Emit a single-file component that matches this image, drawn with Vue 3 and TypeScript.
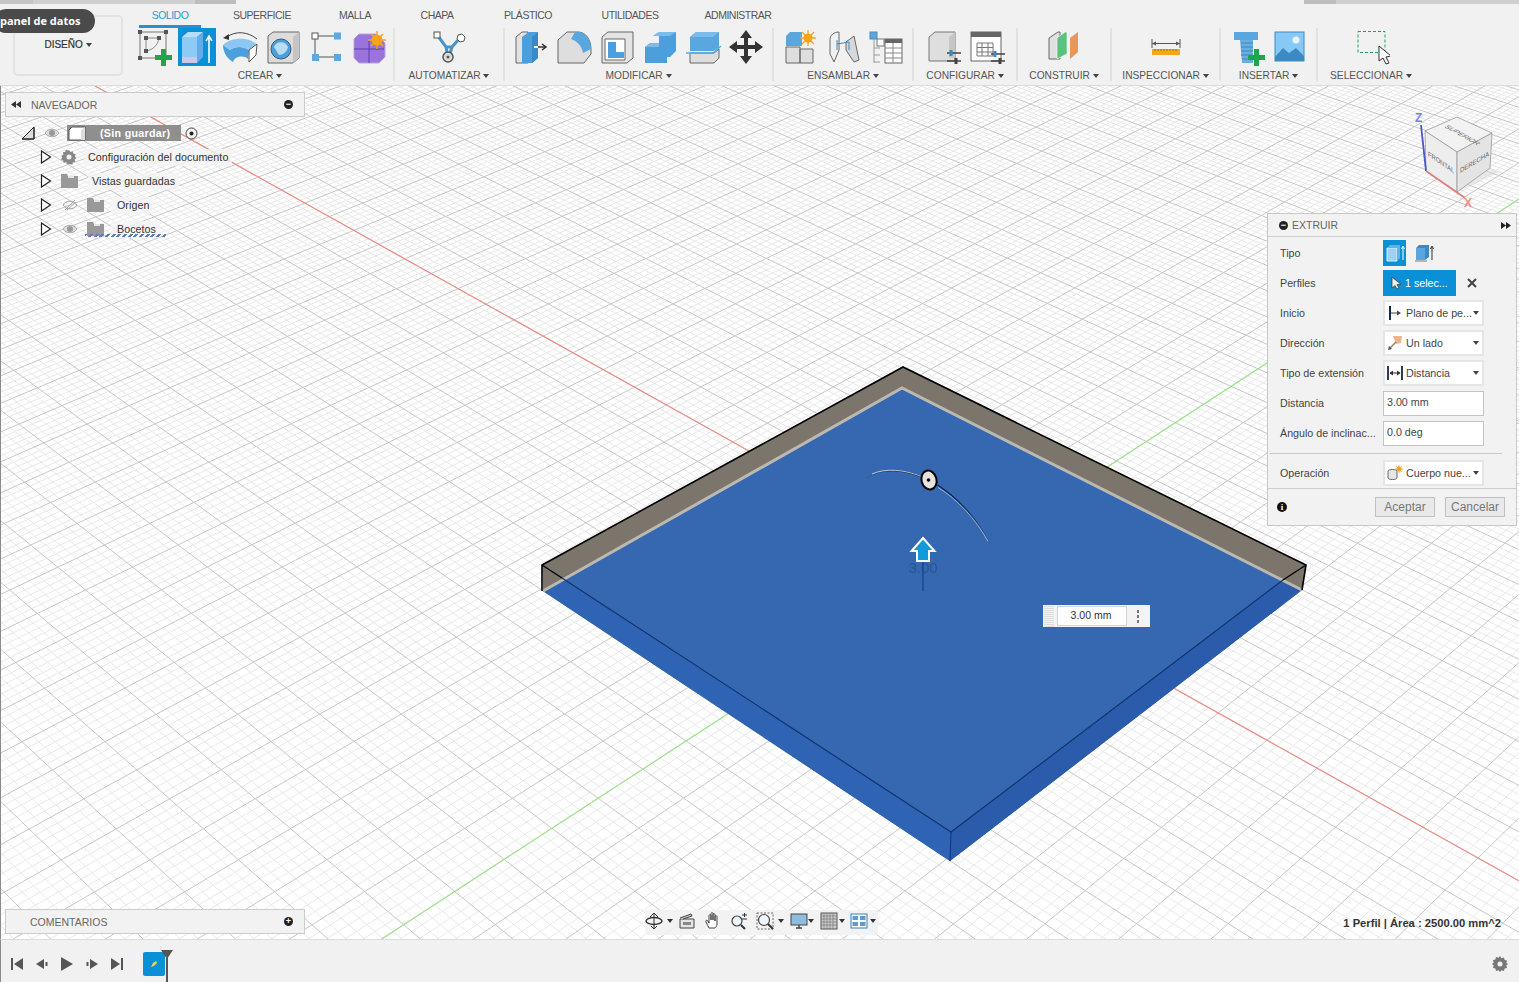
<template>
  <div class="app">
    <!-- Ribbon -->
    <header class="toolbar">
      <div class="strip">
        <div class="strip__left"><i></i><i></i><i></i></div>
        <div class="strip__right"><i></i><i></i></div>
      </div>
      <div class="toolbar__body">
        <div class="workspace">
          <div class="workspace__box">DISEÑO <span class="caret"></span></div>
        </div>
        <div class="toolbar__main">
          <nav class="tabs">
            <span
              v-for="(t, i) in tabs" :key="t.name"
              :class="['tab', { 'tab--on': i === 0 }]"
              :style="{ width: t.width + 'px' }"
            >{{ t.name }}</span>
          </nav>
          <div class="ribbon">
            <div class="group group--first" style="width: 262px">
              <div class="group__icons">
                <svg class="ico" viewBox="0 0 38 38">
                  <rect x="5" y="4" width="26" height="26" fill="none" stroke="#777" />
                  <path d="M11 10h13M11 10v13" fill="none" stroke="#888" />
                  <path d="M24 10C23 17 18 22 11 23" fill="none" stroke="#888" />
                  <path d="M3 2h4v4H3zM29 2h4v4h-4zM3 28h4v4H3zM9 8h4v4H9zM22 8h4v4h-4zM9 21h4v4H9z" fill="#555" />
                  <path d="M26 21h5v6h6v5h-6v6h-5v-6h-6v-5h6z" fill="#1da64a" />
                </svg>
                <svg class="ico ico--on" viewBox="0 0 38 38">
                  <rect width="38" height="38" fill="#0a90d6" />
                  <path d="M4 9h15v26H4z" fill="#8fcaf6" />
                  <path d="M4 29h15v6H4z" fill="#cfc7ea" />
                  <path d="M4 9l6-5h15l-6 5z" fill="#b7def9" />
                  <path d="M19 9l6-5v25l-6 6z" fill="#5eaee8" />
                  <path d="M31 35V9M28 13l3-5 3 5" fill="none" stroke="#fff" stroke-width="1.6" />
                </svg>
                <svg class="ico" viewBox="0 0 38 38">
                  <path d="M2 17C2 25 7 31 12 34C14 28 23 27 27 31L28 22C22 18 14 18 9 22Z" fill="#4a9fdc" />
                  <path d="M2 17C10 9 28 9 35 16L28 22C22 18 14 18 9 22Z" fill="#8cc6f2" />
                  <path d="M28 22L36 16L35 27L28 34Z" fill="#fff" stroke="#555" />
                  <path d="M6 9C14 3 26 3 36 11" fill="none" stroke="#444" />
                  <path d="M2 10l6-4 0 6z" fill="#333" />
                </svg>
                <svg class="ico" viewBox="0 0 38 38">
                  <path d="M4 8l5-4h26v26l-6 5H4z" fill="#dcdcdc" stroke="#666" />
                  <path d="M29 9l6-5v26l-6 5z" fill="#c4c4c4" />
                  <circle cx="17" cy="21" r="10" fill="#4a9fdc" stroke="#40586e" />
                  <path d="M10 19a7.500 7.500 0 0 1 14 0c-1 4-4 8-9 8z" fill="#b9dcf5" />
                </svg>
                <svg class="ico" viewBox="0 0 38 38">
                  <path d="M11 8h16M8 11v15M11 29h16" stroke="#555" fill="none" />
                  <rect x="5" y="5" width="6" height="6" fill="#fff" stroke="#555" />
                  <rect x="27" y="4.500" width="7" height="7" fill="#5fa8dc" />
                  <rect x="5" y="26" width="7" height="7" fill="#5fa8dc" />
                  <rect x="27" y="26" width="7" height="7" fill="#5fa8dc" />
                </svg>
                <svg class="ico" viewBox="0 0 38 38">
                  <path d="M9 6h17l9 9v14l-6 6H9l-5-5V11z" fill="#9a74dc" stroke="#b8a2e6" />
                  <path d="M4 21h30M19 11v24M27 12v10" stroke="#5d3fa6" fill="none" />
                  <circle cx="27" cy="12" r="5.500" fill="#f6a41c" />
                  <path d="M27 3v18M18 12h18M21 6l12 12M33 6L21 18" stroke="#f6a41c" stroke-width="1.500" />
                </svg>
              </div>
              <div class="group__label">CREAR <span class="caret"></span></div>
            </div>
            <div class="group" style="width: 110px">
              <div class="group__icons">
                <svg class="ico" viewBox="0 0 38 38">
                  <path d="M8 8l8 11h6l7-8M16 19l2 10M22 19l-3 10" fill="none" stroke="#4a93c8" stroke-width="3" />
                  <rect x="4" y="4" width="6" height="6" fill="#fff" stroke="#555" />
                  <path d="M28 7l4-1 3 3-1 4-4 1-3-3z" fill="#fff" stroke="#555" />
                  <circle cx="18" cy="29" r="5" fill="#ddd" stroke="#555" stroke-width="1.500" />
                  <circle cx="18" cy="29" r="1.500" fill="#555" />
                </svg>
              </div>
              <div class="group__label">AUTOMATIZAR <span class="caret"></span></div>
            </div>
            <div class="group" style="width: 269px">
              <div class="group__icons">
                <svg class="ico" viewBox="0 0 38 38">
                  <path d="M4 9l6-5h6v31H4z" fill="#e2e2e2" stroke="#666" />
                  <path d="M10 9l7-5h9v26l-6 5H10z" fill="#4a9fdc" />
                  <path d="M20 9l6-5v26l-6 5z" fill="#3a89c4" />
                  <path d="M22 19h10" stroke="#fff" stroke-width="2" />
                  <path d="M26 19h7M30 16l4 3-4 3" fill="none" stroke="#333" stroke-width="1.500" />
                </svg>
                <svg class="ico" viewBox="0 0 38 38">
                  <path d="M3 35V12l9-8h11c8 0 13 8 13 17v5l-7 9z" fill="#dedede" stroke="#666" />
                  <path d="M20 4h3c8 0 13 8 13 17l-8 4c-1-7-6-12-12-14z" fill="#5aa7e0" />
                </svg>
                <svg class="ico" viewBox="0 0 38 38">
                  <path d="M4 9l6-5h25v26l-6 5H4z" fill="#e4e4e4" stroke="#666" />
                  <path d="M7 11h20v21H7z" fill="#fff" stroke="#666" />
                  <path d="M10 14h8v10h8v6H10z" fill="#4a9fdc" />
                </svg>
                <svg class="ico" viewBox="0 0 38 38">
                  <path d="M12 8l6-4h17v19l-6 6H18V8z" fill="#4a9fdc" />
                  <path d="M12 8l6-4h17l-6 4z" fill="#7cbcec" />
                  <path d="M4 19l5-4h17v20H4z" fill="#4a9fdc" />
                  <path d="M4 19l5-4h9v4z" fill="#7cbcec" />
                </svg>
                <svg class="ico" viewBox="0 0 38 38">
                  <path d="M6 9l6-5h23v16l-6 3H6z" fill="#5aa7e0" />
                  <path d="M6 9l6-5h23l-6 5z" fill="#7cbcec" />
                  <path d="M6 25h24l5-4v9l-5 5H6z" fill="#dedede" stroke="#666" />
                  <path d="M2 25h27l8-7" fill="none" stroke="#3fb8e8" stroke-width="1.600" />
                </svg>
                <svg class="ico" viewBox="0 0 38 38">
                  <path d="M19 2l6 8h-4v7h7v-4l8 6-8 6v-4h-7v7h4l-6 8-6-8h4v-7h-7v4l-8-6 8-6v4h7v-7h-4z" fill="#333" />
                </svg>
              </div>
              <div class="group__label">MODIFICAR <span class="caret"></span></div>
            </div>
            <div class="group" style="width: 140px">
              <div class="group__icons">
                <svg class="ico" viewBox="0 0 38 38">
                  <path d="M5 8l4-4h12v14H5z" fill="#5aa7e0" />
                  <path d="M5 19h14v16H5zM19 21h13v14H19z" fill="#dedede" stroke="#666" />
                  <circle cx="27" cy="10" r="4.500" fill="#f6a41c" />
                  <path d="M27 2v16M19 10h16M21 4l12 12M33 4L21 16" stroke="#f6a41c" stroke-width="1.300" />
                </svg>
                <svg class="ico" viewBox="0 0 38 38">
                  <path d="M6 12c0-5 4-8 9-8v18l-5 12-4-8z" fill="#f0f0f0" stroke="#666" />
                  <path d="M22 14l8-6 5 24-5 2-8-12z" fill="#d8d8d8" stroke="#666" />
                  <path d="M13 12v10M25 14v8M13 16l12-2" stroke="#3a89c4" fill="none" />
                </svg>
                <svg class="ico" viewBox="0 0 38 38">
                  <rect x="3" y="4" width="7" height="7" fill="#5aa7e0" stroke="#4a8ab8" />
                  <rect x="10" y="11" width="7" height="7" fill="#fff" stroke="#777" />
                  <path d="M7 11v24M7 20h6M7 27h6M7 34h6" stroke="#999" fill="none" />
                  <rect x="18" y="11" width="17" height="24" fill="#fff" stroke="#666" />
                  <path d="M18 11h17v4H18z" fill="#666" />
                  <path d="M18 20h17M18 25h17M18 30h17M26 15v20" stroke="#888" />
                </svg>
              </div>
              <div class="group__label">ENSAMBLAR <span class="caret"></span></div>
            </div>
            <div class="group" style="width: 104px">
              <div class="group__icons">
                <svg class="ico" viewBox="0 0 38 38">
                  <path d="M4 9l6-5h20v29H4z" fill="#dedede" stroke="#777" />
                  <path d="M24 9l6-5v26h-6z" fill="#c6c6c6" />
                  <path d="M22 25h14M22 33h14" stroke="#444" stroke-width="1.500" />
                  <path d="M26 22v6" stroke="#3a89c4" stroke-width="3" />
                  <path d="M31 30v6" stroke="#444" stroke-width="3" />
                </svg>
                <svg class="ico" viewBox="0 0 38 38">
                  <rect x="3" y="4" width="30" height="29" fill="#fff" stroke="#666" />
                  <path d="M3 4h30v5H3z" fill="#666" />
                  <path d="M9 15h16v13H9zM9 19.500h16M9 24h16M14 15v13M20 15v13" fill="none" stroke="#777" />
                  <path d="M23 26h14M23 33h14" stroke="#444" stroke-width="1.500" />
                  <path d="M27 23v6" stroke="#3a89c4" stroke-width="3" />
                  <path d="M32 30v6" stroke="#444" stroke-width="3" />
                </svg>
              </div>
              <div class="group__label">CONFIGURAR <span class="caret"></span></div>
            </div>
            <div class="group" style="width: 94px">
              <div class="group__icons">
                <svg class="ico" viewBox="0 0 38 38">
                  <path d="M4 10l9-6h2v27H4z" fill="#e0e0e0" stroke="#666" />
                  <path d="M12 31V10l8-6h2v22z" fill="#58c27e" stroke="#fff" stroke-width=".6" />
                  <path d="M25 31V10l8-6v20z" fill="#e8965a" />
                </svg>
              </div>
              <div class="group__label">CONSTRUIR <span class="caret"></span></div>
            </div>
            <div class="group" style="width: 109px">
              <div class="group__icons">
                <svg class="ico" viewBox="0 0 38 38">
                  <path d="M5 11v9M33 11v9M5 15.500h28" stroke="#555" fill="none" />
                  <path d="M5 15.500l4-2v4zM33 15.500l-4-2v4z" fill="#555" />
                  <rect x="5" y="21" width="28" height="6" fill="#f2a71b" />
                  <path d="M8 21v2M11 21v2M14 21v2M17 21v2M20 21v2M23 21v2M26 21v2M29 21v2" stroke="#a8720c" />
                </svg>
              </div>
              <div class="group__label">INSPECCIONAR <span class="caret"></span></div>
            </div>
            <div class="group" style="width: 97px">
              <div class="group__icons">
                <svg class="ico" viewBox="0 0 38 38">
                  <path d="M6 4h24v8H6z" fill="#5aa7e0" />
                  <path d="M12 12h13v23H14z" fill="#6aaee0" />
                  <path d="M13 15h12M13 19h12M13 23h12M13 27h12M14 31h11" stroke="#3f85bb" />
                  <path d="M26 21h5v6h6v5h-6v6h-5v-6h-6v-5h6z" fill="#1da64a" />
                </svg>
                <svg class="ico" viewBox="0 0 38 38">
                  <rect x="4" y="4" width="29" height="29" fill="#86c9f6" stroke="#3c8ac4" />
                  <circle cx="25" cy="12" r="3.500" fill="#e8f4fc" />
                  <path d="M4 29l8-9 6 5 7-5 8 8v5H4z" fill="#3c8ac4" />
                </svg>
              </div>
              <div class="group__label">INSERTAR <span class="caret"></span></div>
            </div>
            <div class="group group--last" style="width: 106px">
              <div class="group__icons">
                <svg class="ico" viewBox="0 0 38 38">
                  <rect x="6" y="3.500" width="27" height="21" fill="none" stroke="#2f9a5c" stroke-dasharray="3 2" />
                  <path d="M27 18l0 15 4-3 3 6 3-1-3-6 5-1z" fill="#fff" stroke="#333" />
                </svg>
              </div>
              <div class="group__label">SELECCIONAR <span class="caret"></span></div>
            </div>
          </div>
        </div>
      </div>
      <div class="data-tip">panel de datos</div>
    </header>

    <!-- 3D view -->
    <main class="view">
      <svg class="scene" viewBox="0 86 1519 853" width="1519" height="853">
        <defs>
          <linearGradient id="arcDark" gradientUnits="userSpaceOnUse" x1="865" y1="470" x2="992" y2="545">
            <stop offset="0" stop-color="#0a1f4a" stop-opacity="0" />
            <stop offset=".3" stop-color="#0a1f4a" />
            <stop offset=".65" stop-color="#0a1f4a" />
            <stop offset="1" stop-color="#0a1f4a" stop-opacity="0" />
          </linearGradient>
        </defs>
        <path :d="grid.minor" stroke="#e9e9e9" stroke-width="1" fill="none" />
        <path :d="grid.major" stroke="#c7c7c7" stroke-width="1" fill="none" />
        <path :d="grid.red" stroke="#ee8d86" stroke-width="1.200" fill="none" />
        <path :d="grid.green" stroke="#9fe58f" stroke-width="1.200" fill="none" />

        <!-- plate being extruded -->
        <polygon points="903,367 1306,565 1302,590 902,388 543,591 542,565" fill="#7b756b" />
        <polygon points="902,388 1302,590 950,861 543,591" fill="#3568b0" />
        <polygon points="543,591 562,578 951,832 950,861" fill="#2f63b3" />
        <polygon points="1302,590 1283,580 951,832 950,861" fill="#2b5cab" />
        <polyline points="543,591 902,388 1302,590" fill="none" stroke="#bdb9b1" stroke-width="3" />
        <polyline points="562,578 951,832 1283,580" fill="none" stroke="#123372" stroke-width="1.200" />
        <line x1="951" y1="832" x2="950" y2="861" stroke="#123372" />
        <polyline points="542,591 542,565 903,367 1306,565 1302,590" fill="none" stroke="#000" stroke-width="1.600" />
        <line x1="542" y1="565" x2="562" y2="578" stroke="#000" stroke-width="1.400" />
        <line x1="1306" y1="565" x2="1283" y2="580" stroke="#000" stroke-width="1.400" />

        <!-- extrude manipulator -->
        <path d="M867 478C880 468 905 468 929 480C955 494 975 516 990 543" fill="none" stroke="url(#arcDark)" stroke-width="1.400" />
        <path d="M872 474C885 468 905 469 925 478" fill="none" stroke="#dfe6f0" stroke-width=".8" />
        <path d="M938 486C958 498 976 518 988 540" fill="none" stroke="#dfe6f0" stroke-width=".6" transform="translate(0 1.500)" />
        <ellipse cx="929" cy="480" rx="7.500" ry="9.500" transform="rotate(-15 929 480)" fill="#e6e2de" stroke="#000" stroke-width="2" />
        <circle cx="928.500" cy="480" r="1.800" fill="#000" />
        <text x="923" y="573" text-anchor="middle" class="ghost">3.00</text>
        <line x1="923" y1="562" x2="923" y2="591" stroke="#1c4588" stroke-width="1.400" />
        <polygon points="923,538 934.500,551 929,551 929,561 917,561 917,551 911.500,551" fill="#129bdc" stroke="#fff" stroke-width="2" />

        <!-- view cube -->
        <polygon points="1426,171 1457,192 1500,172 1470,160" fill="#d6d6d6" opacity=".5" />
        <polygon points="1425,131 1457,117 1492,133 1457,152" fill="#f2f2f2" stroke="#999" stroke-width=".8" />
        <polygon points="1425,131 1457,152 1457,192 1426,171" fill="#ededed" stroke="#999" stroke-width=".8" />
        <polygon points="1457,152 1492,133 1490,168 1457,192" fill="#e4e4e4" stroke="#999" stroke-width=".8" />
        <text class="cube-text" transform="matrix(.9 .5 -.9 .42 1444 127)">SUPERIOR</text>
        <text class="cube-text" transform="matrix(.82 .55 0 1 1428 156)">FRONTAL</text>
        <text class="cube-text" transform="matrix(.85 -.5 0 1 1460 173)">DERECHA</text>
        <line x1="1421" y1="125" x2="1426" y2="171" stroke="#4a55c8" stroke-width="1.800" />
        <line x1="1426" y1="171" x2="1465" y2="198" stroke="#e08080" stroke-width="1.800" />
        <text x="1415" y="122" class="axis-text" fill="#7a80e0">Z</text>
        <text x="1464" y="207" class="axis-text" fill="#ee8d86">X</text>
      </svg>

      <section class="panel nav-panel">
        <div class="panel__bar">
          <svg class="panel__arrows" width="10" height="7" viewBox="0 0 10 7"><path d="M5 0v7L0 3.500zM10 0v7L5 3.500z" fill="#333" /></svg>
          <span class="panel__title">NAVEGADOR</span>
          <span class="round-btn">−</span>
        </div>
      </section>

      <ul class="tree">
        <li class="tree__row">
          <svg class="tw-open" width="14" height="14" viewBox="0 0 14 14"><path d="M1 13L13 1v12z" fill="#ddd" stroke="#222" /><path d="M1 13L13 1v12z" fill="none" stroke="#222" /></svg>
          <svg class="t-eye" width="16" height="12" viewBox="0 0 16 12"><path d="M1 6c3-5 11-5 14 0-3 5-11 5-14 0z" fill="#ddd" stroke="#aaa" /><circle cx="8" cy="6" r="3" fill="#999" /></svg>
          <div class="tree__root">
            <svg width="18" height="15" viewBox="0 0 18 15"><path d="M1 4l3-3h13v13H1z" fill="#fff" stroke="#555" /><path d="M13 4l4-3v13l-4 0z" fill="#ddd" /></svg>
            <span>(Sin guardar)</span>
          </div>
          <svg class="t-radio" width="13" height="13" viewBox="0 0 13 13"><circle cx="6.500" cy="6.500" r="5.500" fill="#f4f4f4" stroke="#444" /><circle cx="6.500" cy="6.500" r="2" fill="#222" /></svg>
        </li>
        <li v-for="r in rows" :key="r.label" class="tree__row tree__row--sub">
          <svg class="tw" width="12" height="14" viewBox="0 0 12 14"><path d="M1.500 1l9 6-9 6z" fill="#fff" stroke="#222" stroke-width="1.200" /></svg>
          <template v-if="r.kind === 'gear'">
            <svg class="t-gear" width="16" height="16" viewBox="0 0 16 16"><path d="M8 1l1.500 2 2.300-.8.500 2.400 2.400.6-.8 2.300 1.600 1.500-2 1.500.8 2.300-2.400.5-.6 2.400-2.300-.8L6.500 15 5 13l-2.300.8-.5-2.400-2 -.6.8-2.300L.5 7l2-1.500L1.800 3.200 4.200 2.700 4.800.8 7 1.600z" fill="#888" /><circle cx="8" cy="8" r="2.500" fill="#f2f2f2" /></svg>
          </template>
          <template v-if="r.eye === 'off'">
            <svg class="t-eye2" width="16" height="12" viewBox="0 0 16 12"><path d="M1 6c3-5 11-5 14 0-3 5-11 5-14 0z" fill="none" stroke="#aaa" /><path d="M3 11L13 1M5 11L14 3" stroke="#aaa" /></svg>
          </template>
          <template v-if="r.eye === 'on'">
            <svg class="t-eye2" width="16" height="12" viewBox="0 0 16 12"><path d="M1 6c3-5 11-5 14 0-3 5-11 5-14 0z" fill="#ddd" stroke="#aaa" /><circle cx="8" cy="6" r="3" fill="#999" /></svg>
          </template>
          <svg v-if="r.kind === 'folder'" :class="r.eye ? 't-folder2' : 't-folder'" width="17" height="14" viewBox="0 0 17 14"><path d="M0 0h6l1 2h10v12H0z" fill="#999" /><path d="M7 2h6v2H7z" fill="#e4e4e4" /></svg>
          <span :class="['tree__text', r.cls]">{{ r.label }}</span>
        </li>
      </ul>
      <div class="squiggle"></div>

      <section class="panel comments">
        <div class="panel__bar">
          <span class="panel__title panel__title--c">COMENTARIOS</span>
          <span class="round-btn">+</span>
        </div>
      </section>

      <!-- Extrude dialog -->
      <aside class="dialog">
        <div class="dialog__head">
          <span class="round-btn round-btn--sm">−</span>
          <span class="dialog__title">EXTRUIR</span>
          <svg class="dialog__more" width="10" height="7" viewBox="0 0 10 7"><path d="M0 0v7l5-3.500zM5 0v7l5-3.500z" fill="#222" /></svg>
        </div>
        <div class="dialog__body">
          <div class="drow">
            <label>Tipo</label>
            <div class="type-pair">
              <span class="type-on">
                <svg width="20" height="20" viewBox="0 0 20 20"><path d="M2 5h10v13H2z" fill="#9bd2f8" stroke="#d7eefc" /><path d="M2 5l3-3h10l-3 3zM12 5l3-3v13l-3 3z" fill="#62b0e8" /><path d="M18 17V4M16.500 6L18 3l1.500 3" stroke="#fff" fill="none" /></svg>
              </span>
              <svg width="20" height="20" viewBox="0 0 20 20"><path d="M2 5h9v12H2z" fill="#5aa7e0" /><path d="M2 5l3-3h10l-4 3zM11 5l4-3v12l-4 3z" fill="#3c8ac4" /><path d="M1 18h12" stroke="#777" /><path d="M18 17V4M16.500 6L18 3l1.500 3" stroke="#333" fill="none" /></svg>
            </div>
          </div>
          <div class="drow">
            <label>Perfiles</label>
            <span class="sel-btn">
              <svg width="10" height="14" viewBox="0 0 10 14"><path d="M1 1v11l3-2.500L6 13l2-1-2-3.500h4z" fill="#eee" stroke="#333" stroke-width=".7" /></svg>
              1 selec...
            </span>
            <svg class="clear" width="10" height="10" viewBox="0 0 10 10"><path d="M1 1l8 8M9 1l-8 8" stroke="#444" stroke-width="2" /></svg>
          </div>
          <div class="drow">
            <label>Inicio</label>
            <span class="dd">
              <svg width="16" height="16" viewBox="0 0 16 16"><path d="M3 1v14" stroke="#14284a" stroke-width="2" /><path d="M4 8h8" stroke="#444" /><path d="M10 5.500L14 8l-4 2.500z" fill="#444" /></svg>
              <span class="dd__t">Plano de pe...</span><span class="caret caret--dd"></span>
            </span>
          </div>
          <div class="drow">
            <label>Dirección</label>
            <span class="dd">
              <svg width="16" height="16" viewBox="0 0 16 16"><path d="M6 1h9l-1 7-5 1z" fill="#eab58e" /><path d="M9 7L2 14" stroke="#a08060" stroke-width="1.500" /><path d="M1 15l1-4 3 3z" fill="#555" /></svg>
              <span class="dd__t">Un lado</span><span class="caret caret--dd"></span>
            </span>
          </div>
          <div class="drow">
            <label>Tipo de extensión</label>
            <span class="dd">
              <svg width="16" height="16" viewBox="0 0 16 16"><path d="M1 1v14M15 1v14" stroke="#14284a" stroke-width="1.800" /><path d="M3 8h10" stroke="#333" /><path d="M6 5.500L2.500 8 6 10.500zM10 5.500L13.500 8 10 10.500z" fill="#333" /></svg>
              <span class="dd__t">Distancia</span><span class="caret caret--dd"></span>
            </span>
          </div>
          <div class="drow">
            <label>Distancia</label>
            <span class="inp">3.00 mm</span>
          </div>
          <div class="drow">
            <label>Ángulo de inclinac...</label>
            <span class="inp">0.0 deg</span>
          </div>
          <div class="dialog__rule"></div>
          <div class="drow">
            <label>Operación</label>
            <span class="dd">
              <svg width="16" height="16" viewBox="0 0 16 16"><path d="M1 6c0-2 9-2 9 0v7c0 2-9 2-9 0z" fill="#e6e6e6" stroke="#666" /><circle cx="12" cy="4" r="2.500" fill="#f6a41c" /><path d="M12 0v8M8 4h8M9 1l6 6M15 1L9 7" stroke="#f6a41c" stroke-width=".8" /></svg>
              <span class="dd__t">Cuerpo nue...</span><span class="caret caret--dd"></span>
            </span>
          </div>
        </div>
        <div class="dialog__foot">
          <span class="info">i</span>
          <button class="btn btn--ok">Aceptar</button>
          <button class="btn btn--no">Cancelar</button>
        </div>
      </aside>

      <!-- Floating distance input -->
      <div class="dist">
        <span class="dist__grip"></span>
        <span class="dist__field">3.00 mm</span>
        <span class="dist__dots"><i></i><i></i><i></i></span>
      </div>

      <!-- Navigation bar -->
      <div class="navbar">
        <svg class="n" viewBox="0 0 18 18"><path d="M9 1v16M5 5l4-4 4 4M6 14l3 3 3-3" fill="none" stroke="#333" /><ellipse cx="9" cy="9" rx="8" ry="3.500" fill="none" stroke="#333" stroke-width="1.400" /></svg>
        <span class="caret caret--n"></span>
        <svg class="n n--cam" viewBox="0 0 18 18"><path d="M2 7h14v9H2z" fill="#e4e4e4" stroke="#444" /><path d="M5 10h8v3H5z" fill="#888" /><path d="M2 6l11-4 1 2-9 3" fill="#ccc" stroke="#444" /></svg>
        <svg class="n n--8" viewBox="0 0 18 18"><path d="M5 16L2 10c-1-2 1-2 2-1l1 2V4c0-2 2-2 2 0v4V2c0-2 2-2 2 0v6V3c0-2 2-2 2 0v6V5c0-2 2-2 2 0v7c0 2-1 3-2 4z" fill="#fff" stroke="#333" stroke-width=".9" /></svg>
        <svg class="n n--8" viewBox="0 0 18 18"><circle cx="7" cy="9" r="5" fill="#eef6fb" stroke="#444" stroke-width="1.200" /><path d="M11 13l4 4" stroke="#333" stroke-width="2" /><path d="M12 3h5M14.500 1v4M12 7h5" stroke="#333" /></svg>
        <svg class="n n--8" viewBox="0 0 18 18"><rect x="1" y="1" width="16" height="16" fill="none" stroke="#666" stroke-dasharray="2 1.500" /><circle cx="8" cy="8" r="5.500" fill="#eef6fb" stroke="#444" stroke-width="1.200" /><path d="M12 12l5 5" stroke="#333" stroke-width="2" /></svg>
        <span class="caret caret--n"></span>
        <svg class="n n--6" viewBox="0 0 18 18"><rect x="1" y="2" width="16" height="11" fill="#8ebde0" stroke="#444" /><path d="M6 16h6M9 13v3" stroke="#444" stroke-width="1.400" /></svg>
        <span class="caret caret--n caret--t0"></span>
        <svg class="n n--6" viewBox="0 0 18 18"><rect x="1" y="1" width="16" height="16" fill="#ccc" stroke="#555" /><path d="M4 1v16M7 1v16M10 1v16M13 1v16M1 4h16M1 7h16M1 10h16M1 13h16" stroke="#777" stroke-width=".7" /></svg>
        <span class="caret caret--n caret--t1"></span>
        <svg class="n n--5" viewBox="0 0 18 18"><rect x="1" y="2" width="16" height="14" fill="#fff" stroke="#3d7fb4" /><path d="M2.500 4h5.500v4H2.500zM10 4h5.500v4H10zM2.500 10h5.500v4H2.500zM10 10h5.500v4H10z" fill="#5c9cd0" /></svg>
        <span class="caret caret--n caret--t2"></span>
      </div>

      <div class="status">1 Perfil | Área : 2500.00 mm^2</div>
    </main>

    <!-- Timeline -->
    <footer class="timeline">
      <svg width="14" height="14" viewBox="0 0 14 14"><path d="M2 1v12" stroke="#555" stroke-width="2" /><path d="M13 1v12L4 7z" fill="#555" /></svg>
      <svg width="14" height="14" viewBox="0 0 14 14"><path d="M9 2v10L1 7z" fill="#555" /><path d="M11.500 5v4" stroke="#555" stroke-width="2" /></svg>
      <svg width="14" height="16" viewBox="0 0 14 16"><path d="M1 1v14l12-7z" fill="#555" /></svg>
      <svg width="14" height="14" viewBox="0 0 14 14"><path d="M5 2v10l8-5z" fill="#555" /><path d="M2.500 5v4" stroke="#555" stroke-width="2" /></svg>
      <svg width="14" height="14" viewBox="0 0 14 14"><path d="M1 1v12l9-6z" fill="#555" /><path d="M12 1v12" stroke="#555" stroke-width="2" /></svg>
      <div class="feature">
        <svg width="8" height="8" viewBox="0 0 8 8"><path d="M1 7l2-4 3-2 1 2-3 3z" fill="#e2d65a" /></svg>
        <div class="marker"></div>
      </div>
      <svg class="tl-gear" width="16" height="16" viewBox="0 0 16 16"><path d="M8 0l1.500 2.200 2.500-.8.600 2.500 2.500.6-.8 2.500L16 8l-1.700 1.500.8 2.500-2.500.6-.6 2.500-2.500-.8L8 16l-1.500-1.700-2.500.8-.6-2.500-2.500-.6.8-2.500L0 8l1.700-1.500L.9 4l2.500-.6L4 .9l2.500.8z" fill="#777" /><circle cx="8" cy="8" r="2.500" fill="#f1f1f1" /></svg>
    </footer>
  </div>
</template>

<script setup lang="ts">
const tabs = [
  { name: 'SOLIDO', width: 62 },
  { name: 'SUPERFICIE', width: 122 },
  { name: 'MALLA', width: 64 },
  { name: 'CHAPA', width: 100 },
  { name: 'PLÁSTICO', width: 82 },
  { name: 'UTILIDADES', width: 122 },
  { name: 'ADMINISTRAR', width: 94 },
]

const rows = [
  { label: 'Configuración del documento', kind: 'gear', eye: '', cls: 'tt-a' },
  { label: 'Vistas guardadas', kind: 'folder', eye: '', cls: 'tt-b' },
  { label: 'Origen', kind: 'folder', eye: 'off', cls: 'tt-c' },
  { label: 'Bocetos', kind: 'folder', eye: 'on', cls: 'tt-c' },
]

// ground plane projection, fitted on the four corners of the 50 x 50 profile
const p = [[902, 388], [1302, 590], [950, 861], [543, 591]]
const dx1 = p[1][0] - p[2][0], dx2 = p[3][0] - p[2][0], dx3 = p[0][0] - p[1][0] + p[2][0] - p[3][0]
const dy1 = p[1][1] - p[2][1], dy2 = p[3][1] - p[2][1], dy3 = p[0][1] - p[1][1] + p[2][1] - p[3][1]
const den = dx1 * dy2 - dx2 * dy1
const g = (dx3 * dy2 - dx2 * dy3) / den / 50
const h = (dx1 * dy3 - dx3 * dy1) / den / 50
const a = (p[1][0] - p[0][0]) / 50 + g * p[1][0], b = (p[3][0] - p[0][0]) / 50 + h * p[3][0], c = p[0][0]
const d = (p[1][1] - p[0][1]) / 50 + g * p[1][1], e = (p[3][1] - p[0][1]) / 50 + h * p[3][1], f = p[0][1]

function project(u: number, v: number): string {
  const w = g * u + h * v + 1
  return `${((a * u + b * v + c) / w).toFixed(1)} ${((d * u + e * v + f) / w).toFixed(1)}`
}

// world origin as seen where the two axes cross
const ox = 955, oy = 566
const m11 = a - ox * g, m12 = b - ox * h, m21 = d - oy * g, m22 = e - oy * h
const det = m11 * m22 - m12 * m21
const u0 = ((ox - c) * m22 - m12 * (oy - f)) / det
const v0 = (m11 * (oy - f) - m21 * (ox - c)) / det

const FAR = -700
function limit(other: number, k: number, l: number): number {
  // stop the line before it runs behind the camera
  return (0.12 - 1 - k * other) / l
}

function lineU(u: number): string {
  const end = Math.min(limit(u, g, h), 500)
  return end > FAR ? `M${project(u, FAR)}L${project(u, end)}` : ''
}
function lineV(v: number): string {
  const end = Math.min(limit(v, h, g), 500)
  return end > FAR ? `M${project(FAR, v)}L${project(end, v)}` : ''
}

function buildGrid() {
  let minor = ''
  let major = ''
  for (let i = -600; i <= 400; i++) {
    const s = lineU(u0 + i) + lineV(v0 + i)
    if (i % 5 === 0) major += s
    else minor += s
  }
  return { minor, major, red: lineV(v0), green: lineU(u0) }
}

const grid = buildGrid()
</script>

<style scoped>
.app {
  width: 1519px; height: 982px; display: flex; flex-direction: column; overflow: hidden;
  font-family: "Liberation Sans", Arial, sans-serif; font-size: 10.7px; color: #444;
  background: #f1f1f1; position: relative;
}

/* Ribbon */
.toolbar { height: 86px; flex: none; background: #f1f1f1; border-bottom: 1px solid #dcdcdc; box-sizing: border-box; position: relative; }
.strip { height: 4px; display: flex; justify-content: space-between; }
.strip__left, .strip__right { display: flex; height: 4px; }
.strip i { display: block; height: 4px; }
.strip__left i:nth-child(1) { width: 33px; background: #c4c4c4; }
.strip__left i:nth-child(2) { width: 162px; background: #cfcfcf; }
.strip__left i:nth-child(3) { width: 41px; background: #bdbdbd; }
.strip__right i:nth-child(1) { width: 32px; background: #bdbdbd; }
.strip__right i:nth-child(2) { width: 183px; background: #cfcfcf; }

.toolbar__body { display: flex; }
.workspace { width: 133px; flex: none; padding: 11px 0 0 13px; box-sizing: border-box; }
.workspace__box {
  width: 110px; height: 61px; box-sizing: border-box; border: 2px solid #e2e2e2; border-radius: 5px;
  text-align: center; padding-top: 22px; font-size: 10px; color: #333; -webkit-text-stroke: .2px #333;
}
.caret {
  display: inline-block; width: 0; height: 0; margin-left: 0; vertical-align: 1px;
  border-left: 3px solid transparent; border-right: 3px solid transparent; border-top: 4px solid #444;
}

.tabs { display: flex; height: 24px; margin-left: 6px; box-sizing: border-box; padding-top: 5px; }
.tab {
  height: 19px; line-height: 13px; color: #555; box-sizing: border-box; text-align: center;
  font-size: 10.5px; letter-spacing: -.5px; flex: none;
}
.tab--on { color: #2e9ad0; border-bottom: 3px solid #2a8fd0; }

.ribbon { display: flex; }
.group {
  height: 53px; box-sizing: border-box; border-right: 2px solid #e2e2e2;
  display: flex; flex-direction: column; align-items: center; flex: none;
}
.group--last { border-right: 0; }
.group__icons { display: flex; gap: 5px; height: 38px; }
.group--first .group__icons { padding-right: 4px; }
.ico { width: 38px; height: 38px; display: block; flex: none; }
.group__label { margin-top: 4px; white-space: nowrap; color: #555; line-height: 12px; font-size: 10.2px; }
.group--first .group__label { margin-right: 6px; }

.data-tip {
  position: absolute; left: -6px; top: 9px; height: 24px; width: 101px; box-sizing: border-box; padding-left: 6px;
  background: #4a4a4a; border-radius: 12px; color: #fff; font: 700 11px/24px "Open Sans", sans-serif; white-space: nowrap;
}

/* 3D view */
.view { flex: 1; position: relative; background: #fff; overflow: hidden; border-left: 1px solid #8a8a8a; }
.scene { position: absolute; left: -1px; top: 0; display: block; }
.ghost { font: 15px "Liberation Sans", sans-serif; fill: #2a5596; }
.cube-text { font: 7px "Liberation Sans", sans-serif; fill: #666; }
.axis-text { font: 700 12px "Liberation Sans", sans-serif; }

.panel { position: absolute; left: 4px; width: 300px; }
.panel__bar {
  height: 25px; box-sizing: border-box; background: #f2f2f2; border: 1px solid #ccc;
  display: flex; align-items: center; color: #666;
}
.nav-panel { top: 6px; }
.comments { top: 823px; }
.panel__arrows { margin: 0 10px 0 5px; }
.panel__title { flex: 1; font-size: 10.5px; }
.panel__title--c { padding-left: 24px; }
.round-btn {
  width: 9px; height: 9px; border-radius: 50%; background: #222; color: #fff; margin-right: 11px;
  font: 700 9px/9px "Liberation Sans", sans-serif; text-align: center;
}
.round-btn--sm { margin-right: 4px; }

.tree { position: absolute; left: -1px; top: 35px; margin: 0; padding: 0; list-style: none; }
.tree__row { display: flex; align-items: center; height: 24px; letter-spacing: .05px; }
.tw-open { margin-left: 21px; }
.t-eye { margin-left: 9px; }
.tree__root {
  margin-left: 7px; width: 114px; height: 16px; background: #8f8f8f; display: flex; align-items: center;
  color: #fff; font-weight: 700; box-sizing: border-box; padding-left: 1px; letter-spacing: .3px;
}
.tree__root span { margin-left: 14px; }
.t-radio { margin-left: 4px; }
.tree__row--sub { padding-left: 40px; }
.t-gear { margin-left: 9px; }
.t-folder { margin-left: 9px; }
.t-eye2 { margin-left: 10px; }
.t-folder2 { margin-left: 9px; }
.tree__text { background: rgba(244, 244, 244, .8); padding: 2px 4px; line-height: 13px; color: #333; white-space: nowrap; }
.tt-a { margin-left: 7px; }
.tt-b { margin-left: 10px; }
.tt-c { margin-left: 7px; padding-left: 6px; padding-right: 4px; }
.squiggle {
  position: absolute; left: 84px; top: 148px; width: 81px; height: 3px;
  background: repeating-linear-gradient(135deg, #5d7fb0 0 2px, transparent 2px 4px);
}

/* Dialog */
.dialog {
  position: absolute; left: 1266px; top: 127px; width: 250px; height: 313px; box-sizing: border-box;
  background: #f2f2f2; border: 1px solid #c8c8c8; display: flex; flex-direction: column;
}
.dialog__head {
  height: 23px; flex: none; box-sizing: border-box; border-bottom: 1px solid #ccc;
  display: flex; align-items: center; padding-left: 11px; color: #666;
}
.dialog__title { flex: 1; font-size: 10.5px; }
.dialog__more { margin-right: 5px; }
.dialog__body { flex: 1; padding-top: 1px; }
.drow { height: 30px; display: flex; align-items: center; position: relative; padding-left: 12px; }
.drow label { width: 103px; flex: none; color: #444; white-space: nowrap; }
.type-pair { display: flex; align-items: center; gap: 8px; }
.type-on { width: 23px; height: 26px; background: #0a90d6; display: flex; align-items: center; justify-content: center; }
.sel-btn {
  width: 73px; height: 26px; background: #0a90d6; color: #fff; display: flex; align-items: center; gap: 4px;
  padding-left: 8px; box-sizing: border-box;
}
.clear { margin-left: 11px; }
.dd {
  width: 101px; height: 26px; box-sizing: border-box; background: #fff; border: 2px solid #e6e6e6;
  display: flex; align-items: center; padding-left: 2px; position: relative; color: #444;
}
.dd__t { margin-left: 3px; white-space: nowrap; }
.caret--dd { position: absolute; right: 3px; top: 9px; }
.inp {
  width: 101px; height: 25px; box-sizing: border-box; background: #fff; border: 1px solid #c4c4c4;
  padding-left: 3px; line-height: 20px; color: #444;
}
.dialog__rule { height: 1px; background: #c8c8c8; margin: 5px 14px 4px 2px; }
.dialog__foot {
  height: 37px; flex: none; box-sizing: border-box; border-top: 1px solid #ccc;
  display: flex; align-items: center; padding: 0 11px 0 9px;
}
.info {
  width: 10px; height: 10px; border-radius: 50%; background: #111; color: #fff;
  font: 700 9px/10px "Liberation Serif", serif; text-align: center; margin-right: 88px;
}
.btn {
  height: 20px; padding: 0; background: #e9e9e9; border: 1px solid #c0c0c0; color: #777;
  font: 12px "Liberation Sans", sans-serif;
}
.btn--ok { width: 60px; margin-right: 10px; }
.btn--no { width: 60px; }

/* distance input */
.dist {
  position: absolute; left: 1042px; top: 519px; width: 107px; height: 22px; background: #f3f3f3;
  display: flex; align-items: center;
}
.dist__grip {
  width: 10px; height: 22px; margin-left: 1px; background: repeating-linear-gradient(0deg, #ddd 0 1px, transparent 1px 2px);
}
.dist__field {
  width: 70px; height: 20px; box-sizing: border-box; margin-left: 3px; background: #fff; border: 1px solid #cfd6dd;
  text-align: center; line-height: 16px; color: #333; padding-right: 2px; font-size: 10.5px;
}
.dist__dots { display: flex; flex-direction: column; gap: 2px; margin-left: 10px; }
.dist__dots i { display: block; width: 2px; height: 3px; background: #777; }

/* nav bar */
.navbar {
  position: absolute; left: 644px; top: 824px; width: 233px; height: 25px; box-sizing: border-box; padding-bottom: 3px;
  background: rgba(242, 242, 242, .9); display: flex; align-items: center;
}
.n { width: 18px; height: 18px; flex: none; }
.n--cam { margin-left: 5px; }
.n--8 { margin-left: 8px; }
.n--6 { margin-left: 6px; }
.n--5 { margin-left: 5px; }
.caret--n { margin-left: 4px; border-top-color: #333; flex: none; }
.caret--t0 { margin-left: 0; }
.caret--t1 { margin-left: 1px; }
.caret--t2 { margin-left: 2px; }

.status { position: absolute; right: 18px; top: 831px; font-weight: 700; font-size: 11.2px; color: #333; }

/* timeline */
.timeline {
  height: 43px; flex: none; box-sizing: border-box; background: #f1f1f1; border-top: 1px solid #dcdcdc;
  display: flex; align-items: center; padding: 6px 0 0 9px; gap: 11px; position: relative; border-left: 1px solid #8a8a8a;
}
.feature {
  width: 22px; height: 24px; margin-left: 8px; background: #0a90d6; border-radius: 2px; position: relative;
  display: flex; align-items: center; justify-content: center;
}
.marker {
  position: absolute; left: 18px; top: -2px; width: 0; height: 0;
  border-left: 6px solid transparent; border-right: 6px solid transparent; border-top: 9px solid #555;
}
.marker::after {
  content: ""; position: absolute; left: -1px; top: -1px; width: 2px; height: 35px; background: #555;
}
.tl-gear { margin-left: auto; margin-right: 11px; }
</style>
